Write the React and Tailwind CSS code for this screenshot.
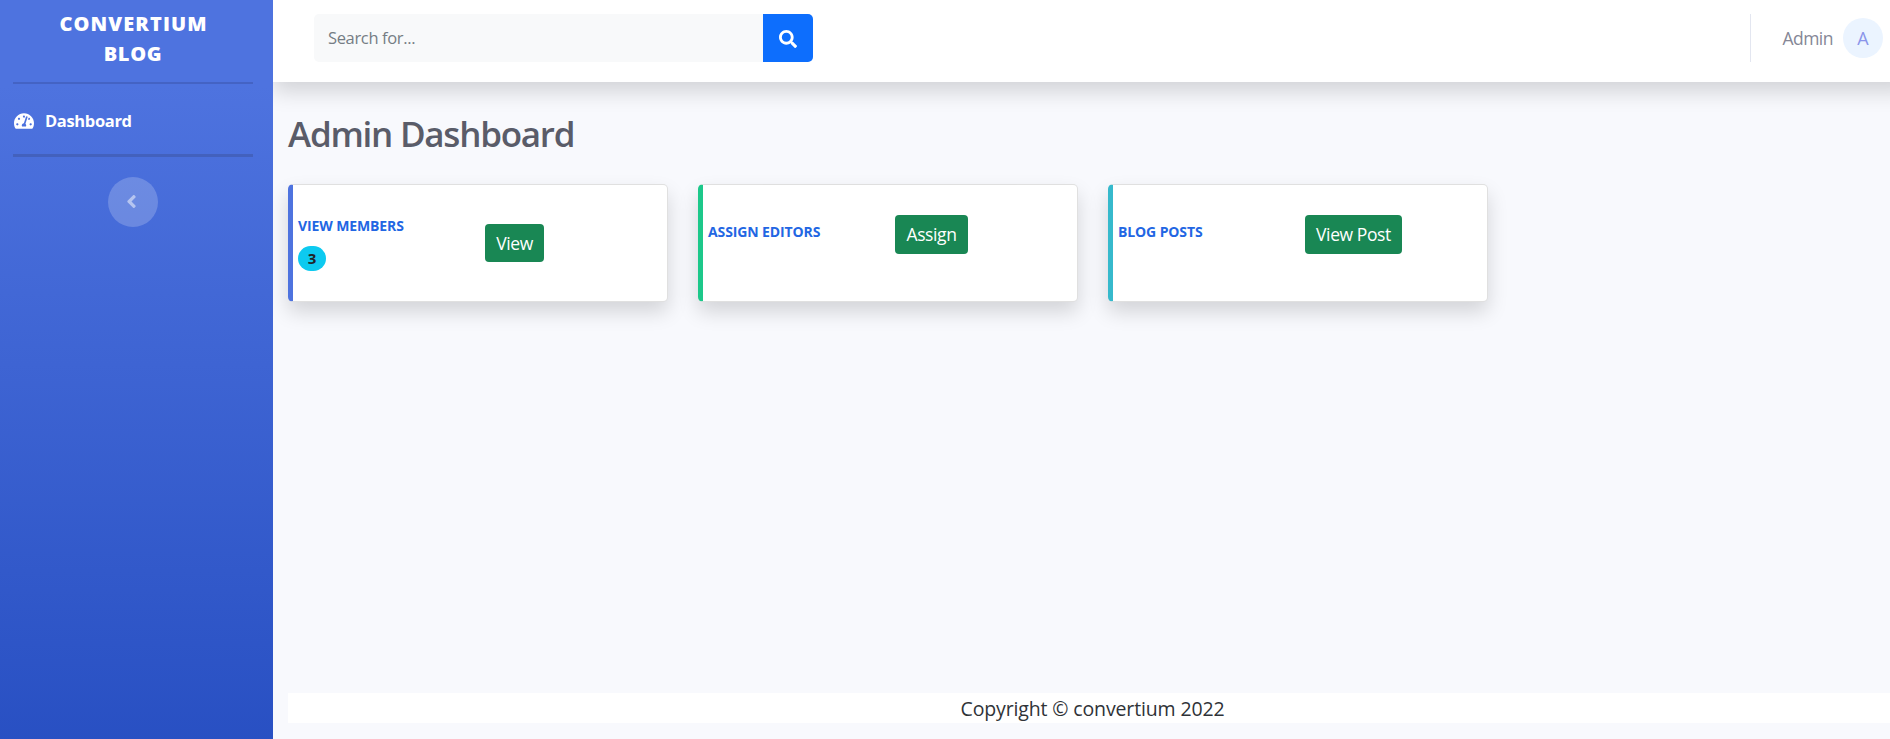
import React from 'react';
import { FaTachometerAlt, FaSearch, FaAngleLeft } from 'react-icons/fa';

function Sidebar() {
  return (
    <aside className="flex h-full w-[273px] shrink-0 flex-col bg-[linear-gradient(180deg,#4e73df_10%,#224abe_100%)] bg-[length:100%_850px] pl-[13px] text-white">
      <div className="flex w-60 flex-col">
        <div className="flex h-[82px] flex-col items-center pt-[9px] text-center text-[20px] leading-[30px] font-extrabold">
          <span className="pl-px tracking-[1.1px]">CONVERTIUM</span>
          <span className="tracking-[0.7px]">BLOG</span>
        </div>
        <hr className="h-[2px] border-0 bg-[#4463c4]" />
        <a className="flex h-[70px] items-center gap-[11px] pt-[4px] pl-px text-[16.5px] font-bold tracking-[-0.35px]">
          <FaTachometerAlt className="h-[18px] w-[20px]" />
          <span>Dashboard</span>
        </a>
        <hr className="h-[3px] border-0 bg-[#4361bd]" />
        <button className="mt-5 flex size-[50px] items-center justify-center self-center rounded-full bg-white/20 pr-[3px] pb-px">
          <FaAngleLeft className="size-[21px] text-white/50" />
        </button>
      </div>
    </aside>
  );
}

function Topbar() {
  return (
    <header className="-mr-5 flex h-[82px] shrink-0 items-start justify-between bg-white pt-[14px] pr-[27px] pl-[41px] shadow-[0_10px_20px_rgba(0,0,0,0.15)]">
      <div className="flex h-12">
        <div className="flex w-[449px] items-center rounded-l-[5px] bg-[#f8f9fa] px-[14px] text-[16.5px] tracking-[-0.35px] text-[#757d84]">
          Search for...
        </div>
        <button className="flex w-[50px] items-center justify-center rounded-r-[5px] bg-[#0d6efd] text-white">
          <FaSearch className="mt-[2px] size-[18px]" />
        </button>
      </div>
      <div className="flex h-12 items-center border-l border-[#e3e6f0] pl-[31px]">
        <span className="pt-px text-[17.5px] tracking-[-0.5px] text-[#858796]">Admin</span>
        <span className="ml-[10px] flex size-10 items-center justify-center rounded-full bg-[#ebf4ff] text-[18px] text-[#8a94ea]">
          A
        </span>
      </div>
    </header>
  );
}

function Card({ title, action, accent, top, count }) {
  return (
    <div className={`flex h-[118px] w-[380px] items-start rounded-[5px] border border-l-[5px] border-y-black/12 border-r-black/12 bg-white bg-clip-border pl-[5px] shadow-[0_10px_20px_rgba(0,0,0,0.15)] ${accent}`}>
      <div className={`flex w-[187px] flex-col items-start ${count ? 'pt-[31px]' : 'pt-[37px]'}`}>
        <span className="text-[14px] leading-5 font-bold tracking-[-0.12px] text-[#2266e3]">{title}</span>
        {count && (
          <span className="mt-[10px] flex h-[25px] w-7 items-center justify-center rounded-full bg-[#0dcaf0] text-[15px] font-bold text-[#212529]">
            {count}
          </span>
        )}
      </div>
      <button className={`flex items-center justify-center rounded-[4px] bg-[#198754] text-[17.5px] tracking-[-0.4px] text-white ${top}`}>
        {action}
      </button>
    </div>
  );
}

export default function App() {
  return (
    <div className="flex h-[739px] w-full overflow-hidden bg-[#f8f9fd] font-['Open_Sans',sans-serif]">
      <Sidebar />
      <div className="flex min-w-0 flex-1 flex-col overflow-hidden">
        <Topbar />
        <main className="flex flex-1 flex-col pl-[15px]">
          <h1 className="mt-[31px] text-[35px] leading-[42px] font-[560] tracking-[-1.25px] text-[#5a5c69]">Admin Dashboard</h1>
          <div className="mt-[29px] flex gap-[30px]">
            <Card title="VIEW MEMBERS" action="View" accent="border-l-[#4e73df]" top="mt-[39px] h-[38px] w-[59px]" count="3" />
            <Card title="ASSIGN EDITORS" action="Assign" accent="border-l-[#1cc88a]" top="mt-[30px] h-[39px] w-[73px]" />
            <Card title="BLOG POSTS" action="View Post" accent="border-l-[#36b9cc]" top="mt-[30px] h-[39px] w-[97px]" />
          </div>
          <footer className="mt-auto mb-4 flex h-[30px] items-center justify-center bg-white pt-[2px] pl-[7px] text-[19.5px] tracking-[-0.14px] text-[#2f3338]">
            Copyright © convertium 2022
          </footer>
        </main>
      </div>
    </div>
  );
}
